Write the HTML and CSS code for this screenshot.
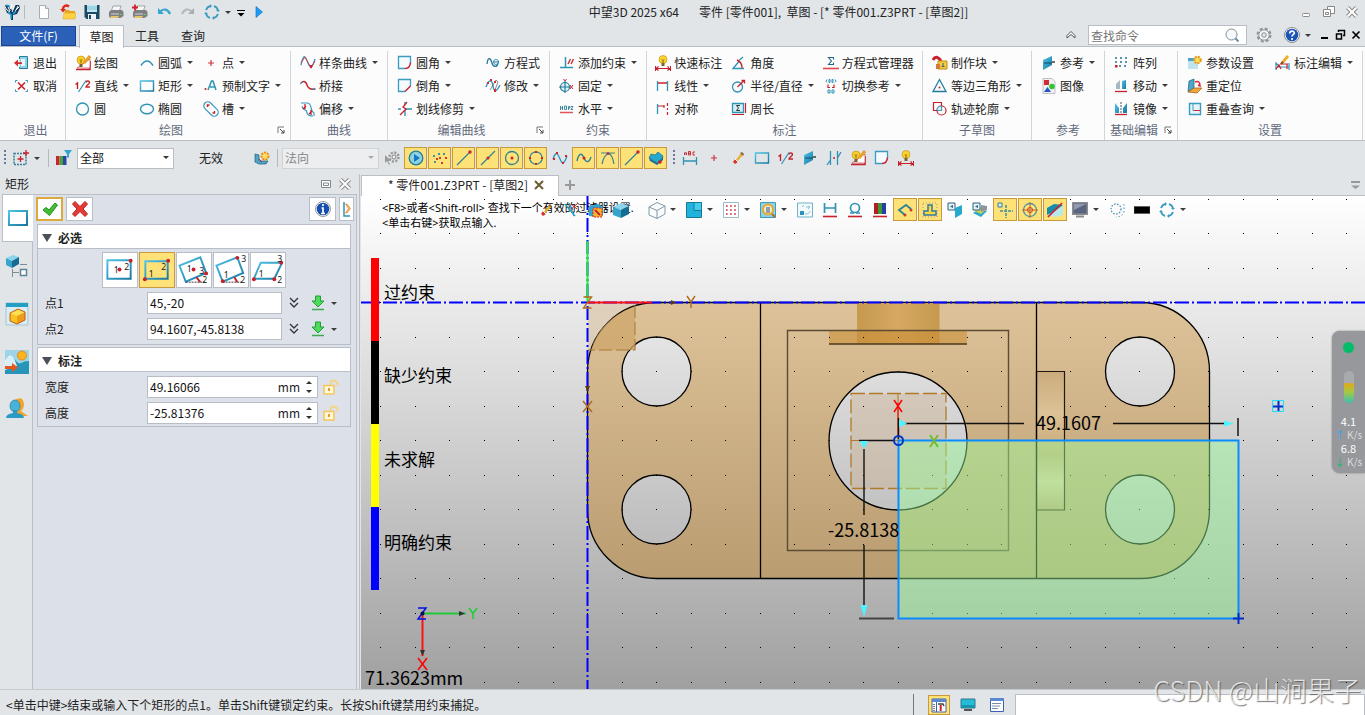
FILE: index.html
```html
<!DOCTYPE html>
<html lang="zh-CN">
<head>
<meta charset="utf-8">
<title>中望3D 2025 x64</title>
<link rel="stylesheet" href="styles.css">
</head>
<body>
<svg class="sprite" aria-hidden="true">
<defs>
<linearGradient id="gb" x1="0" y1="0" x2="1" y2="1"><stop offset="0" stop-color="#4fc3e8"/><stop offset="1" stop-color="#1878a0"/></linearGradient>
<linearGradient id="gc" x1="0" y1="0" x2="0" y2="1"><stop offset="0" stop-color="#eef4f6"/><stop offset="1" stop-color="#a9bcc8"/></linearGradient>
<symbol id="logo" viewBox="0 0 18 18"><path d="M1 2l5 1 1 3 3 1 2-5h4l1 3-3 6-4 1v5H8v-5L4 10z" fill="#123a5c"/><path d="M1 2l3 5 3 2M9 1l-1 4M12 2l-3 7M16 4l-4 4M5 4l2 4M13 7l2-4" stroke="#fff" fill="none"/><path d="M5 9l3 3M10 11l3-3M8 16v-5M3 2l4 1" stroke="#27a9dd" fill="none" stroke-width="1.500"/></symbol>
<symbol id="new" viewBox="0 0 16 16"><path d="M3.500 1.500h6l3 3v10h-9z" fill="#fff" stroke="#a8adb2"/><path d="M9.500 1.500v3h3" fill="#e4e7ea" stroke="#a8adb2"/></symbol>
<symbol id="open" viewBox="0 0 16 16"><path d="M5 6h4l1 1h5v8H4z" fill="#e5a61c"/><path d="M3 15l1-6h12l-1 6z" fill="#ffd044" stroke="#e0a020" stroke-width=".5"/><path d="M9 2.500C6 .5 3 2 3 5" fill="none" stroke="#e02818" stroke-width="2.500"/><path d="M0 5h6L3 8.500z" fill="#e02818"/></symbol>
<symbol id="save" viewBox="0 0 16 16"><path d="M.5 1h15v14h-13l-2-2z" fill="#1d4a63"/><path d="M3 1h10v7H3z" fill="#bfe6f2"/><path d="M3 3h10M3 5h10" stroke="#7cc3da"/><path d="M4 10h8v5H4z" fill="#eef3f5"/><path d="M5 11h2v4H5z" fill="#1d4a63"/></symbol>
<symbol id="print" viewBox="0 0 16 16"><path d="M5 2h8l-2 6H3z" fill="#f7f7f7" stroke="#888" stroke-width=".7"/><path d="M1 8l2-2h11l1.500 2v4l-3 2H2l-1-2z" fill="#7d7f82"/><path d="M3 10h8" stroke="#d5d5d5"/><path d="M12 10.500h2" stroke="#6dd04a"/><path d="M3 12h8l-1 2H2z" fill="#e4c565"/></symbol>
<symbol id="printp" viewBox="0 0 16 16"><use href="#print"/><path d="M0 3.500h6M3 .5v6" stroke="#d0222c" stroke-width="1.800"/></symbol>
<symbol id="undo" viewBox="0 0 16 16"><path d="M4 8c3-4 8-3 10 2" fill="none" stroke="#38a6cf" stroke-width="2.200"/><path d="M2 4v6h6z" fill="#38a6cf"/></symbol>
<symbol id="redo" viewBox="0 0 16 16"><path d="M12 8C9 4 4 5 2 10" fill="none" stroke="#b6bbc0" stroke-width="2.200"/><path d="M14 4v6H8z" fill="#a9aeb3"/></symbol>
<symbol id="ring" viewBox="0 0 16 16"><path d="M2 6A6.500 6.500 0 0 1 6 2M10 2a6.500 6.500 0 0 1 4 4M14 10a6.500 6.500 0 0 1-4 4M6 14a6.500 6.500 0 0 1-4-4" fill="none" stroke="#3b9cc0" stroke-width="2"/><path d="M6 0v4l2-2zM16 6h-4l2 2zM10 16v-4l-2 2zM0 10h4L2 8z" fill="#3b9cc0"/></symbol>
<symbol id="play" viewBox="0 0 16 16"><path d="M5 2.500l6.500 5.500L5 13.500z" fill="#1f9cf0" stroke="#1478d0" stroke-width=".7"/></symbol>
<symbol id="qmenu" viewBox="0 0 16 16"><path d="M4 6.500h8" stroke="#000"/><path d="M4.500 9h7L8 12.500z" fill="#000"/></symbol>
<symbol id="wmin" viewBox="0 0 16 16"><rect x="4.500" y="9.500" width="7" height="3" rx="1" fill="#fff" stroke="#888"/></symbol>
<symbol id="wres" viewBox="0 0 16 16"><path d="M6.500 2.500h7v7h-7z" fill="#fff" stroke="#888"/><path d="M2.500 5.500h7v7h-7z" fill="#fff" stroke="#888"/><path d="M4.500 8.500h3v2h-3z" fill="none" stroke="#888"/></symbol>
<symbol id="wclose" viewBox="0 0 16 16"><path d="M3.500 3.500l9 9M12.500 3.500l-9 9" stroke="#888" stroke-width="4"/><path d="M3.500 3.500l9 9M12.500 3.500l-9 9" stroke="#fff" stroke-width="2"/></symbol>
<symbol id="up" viewBox="0 0 16 16"><path d="M4 8.500l4-4 4 4v2.500L8 7.500 4 11z" fill="#fff" stroke="#555"/></symbol>
<symbol id="mag" viewBox="0 0 16 16"><circle cx="7.500" cy="7.500" r="5.500" fill="#f4f9fb" stroke="#888b8f"/><path d="M11.500 11.500l3 3" stroke="#5a8fa5" stroke-width="2"/></symbol>
<symbol id="gear" viewBox="0 0 16 16"><circle cx="8" cy="8" r="6.500" fill="none" stroke="#8f9396" stroke-width="2" stroke-dasharray="3 2.100"/><circle cx="8" cy="8" r="5.200" fill="#f4f4f4" stroke="#8f9396"/><circle cx="8" cy="8" r="2.300" fill="#dfe3e6" stroke="#8f9396"/></symbol>
<symbol id="help" viewBox="0 0 16 16"><circle cx="8" cy="8" r="7.500" fill="#fff" stroke="#888"/><circle cx="8" cy="8" r="6.300" fill="#1c55b8"/><path d="M5.700 6.500c0-3 4.600-3 4.600-.5C10.300 7.700 8 7.700 8 9.500" fill="none" stroke="#fff" stroke-width="1.700"/><circle cx="8" cy="12" r="1.100" fill="#fff"/></symbol>
<symbol id="bmin" viewBox="0 0 16 16"><path d="M5 11h7" stroke="#000" stroke-width="2"/></symbol>
<symbol id="bres" viewBox="0 0 16 16"><path d="M6.500 5v-1.500h6v5H11" fill="none" stroke="#000" stroke-width="1.500"/><path d="M4.500 7h5v5h-5z" fill="none" stroke="#000" stroke-width="1.500"/></symbol>
<symbol id="bclose" viewBox="0 0 16 16"><path d="M4.500 4.500l7 7M11.500 4.500l-7 7" stroke="#000" stroke-width="1.700"/></symbol>
<symbol id="exit" viewBox="0 0 16 16"><path d="M5.500 4V1.500h8v12h-8V12" fill="#8fd0e3" stroke="#257d9c"/><path d="M7 4h4v7H7z" fill="#e9f6fa"/><path d="M0 8l4-3.500v2.700h4v1.800H4v2.500z" fill="#d52b33"/></symbol>
<symbol id="cancel" viewBox="0 0 16 16"><path d="M1.500 4.500v-2h2M11.500 2.500h2v2M1.500 11.500v2h2M13.500 11.500v2h-2" fill="none" stroke="#2f93b5"/><path d="M4 4.500l7 7M11 4.500l-7 7" stroke="#c8202b" stroke-width="1.600"/></symbol>
<symbol id="draw" viewBox="0 0 16 16"><path d="M1 14.500h14V6M9 10l5-8" fill="none" stroke="#c8202b" stroke-width="1.500"/><path d="M2 13L15 4v9z" fill="#fff" stroke="#c8202b" stroke-width=".6"/><circle cx="6" cy="5" r="4" fill="#f8cf2a" stroke="#b98a10" stroke-width=".6"/><path d="M4.500 9h3v3h-3z" fill="#75612d"/><path d="M9 8l6-7" stroke="#e6a12c" stroke-width="3"/><path d="M5 4l1 4 1-4" stroke="#a97b09" fill="none" stroke-width=".8"/></symbol>
<symbol id="half" viewBox="0 0 16 16"><path d="M.5 6.500L2.500 5v6M11 4.500c0-2 3.500-2 3.500 0 0 1.500-3.500 3-3.500 4.500h4" fill="none" stroke="#c8202b" stroke-width="1.400"/><path d="M3.500 14L11 2.500" stroke="#2f93b5" stroke-width="1.200"/></symbol>
<symbol id="circ" viewBox="0 0 16 16"><circle cx="7.500" cy="8" r="6" fill="none" stroke="#2f93b5" stroke-width="1.300"/></symbol>
<symbol id="arc" viewBox="0 0 16 16"><path d="M2 10.500Q8 1.500 14 10.500" fill="none" stroke="#2f93b5" stroke-width="1.500"/></symbol>
<symbol id="rect" viewBox="0 0 16 16"><path d="M1.500 3h13v10h-13z" fill="none" stroke="url(#gb)" stroke-width="1.400"/></symbol>
<symbol id="ell" viewBox="0 0 16 16"><ellipse cx="8" cy="8" rx="6.500" ry="4.700" fill="none" stroke="#2f93b5" stroke-width="1.400"/></symbol>
<symbol id="pt" viewBox="0 0 16 16"><path d="M8 5v6M5 8h6" stroke="#cf3340" stroke-width="1.200"/></symbol>
<symbol id="txt" viewBox="0 0 16 16"><path d="M5 12L8.500 3h1.500l3 9M7 9h5" fill="none" stroke="#2f93b5" stroke-width="1.500"/><path d="M2.500 10v2" stroke="#d52b33" stroke-width="1.700"/></symbol>
<symbol id="slot" viewBox="0 0 16 16"><rect x="-.5" y="4" width="17" height="8" rx="4" transform="rotate(45 8 8)" fill="none" stroke="#3f9fbc" stroke-width="1.300"/><path d="M4.500 6v-2h2M11.500 10v2h-2" fill="none" stroke="#c8202b" stroke-width="1.400"/></symbol>
<symbol id="spline" viewBox="0 0 16 16"><path d="M1 10C4-4 6 3 8 8s4 6 7-4" fill="none" stroke="#2f93b5" stroke-width="1.300"/><path d="M1 8l4-6 6 11 4-7" fill="none" stroke="#d04a50"/><path d="M9.500 10l1.500 4 2-4z" fill="#c8202b"/></symbol>
<symbol id="bridge" viewBox="0 0 16 16"><path d="M1 5c3-3 5-1 6 2s3 5 8 4" fill="none" stroke="#c8202b" stroke-width="1.500"/><path d="M0 6l3-2M12 11h4" stroke="#2f93b5"/></symbol>
<symbol id="offset" viewBox="0 0 16 16"><path d="M1 2h6c6 0 2 7 7 10v3M2 5c1 6 5 2 5 7 1 3 4 3 6 3" fill="none" stroke="#3b9cc0" stroke-width="1.200"/><path d="M5 3v5M3 8l3-3M11 9v5M9 13l3-3" stroke="#c8202b" stroke-width="1.300"/></symbol>
<symbol id="fillet" viewBox="0 0 16 16"><path d="M8 13.500H1.500v-12h12V8" fill="#f4fbfd" stroke="#3b9cc0" stroke-width="1.300"/><path d="M8 13.500q5 0 5.500-6" fill="none" stroke="#c8202b" stroke-width="1.500"/></symbol>
<symbol id="chamfer" viewBox="0 0 16 16"><path d="M8 13.500H1.500v-12h12V8" fill="#f4fbfd" stroke="#3b9cc0" stroke-width="1.300"/><path d="M8 13.500L13.500 8" fill="none" stroke="#c8202b" stroke-width="1.500"/></symbol>
<symbol id="trim" viewBox="0 0 16 16"><path d="M1 8h3M8 8h7M8 1v3M8 9v6" stroke="#2f93b5" stroke-width="1.400"/><path d="M10 1L6 6l3 2-6 6" fill="none" stroke="#c8202b" stroke-width="1.300"/></symbol>
<symbol id="eq" viewBox="0 0 16 16"><path d="M2 9C3 0 6 4 7 8s5 5 6 0" fill="none" stroke="#2f7595" stroke-width="1.300"/><circle cx="11" cy="7" r="2.500" fill="none" stroke="#3b9cc0"/><path d="M8 7h6" stroke="#2f7595"/></symbol>
<symbol id="modify" viewBox="0 0 16 16"><path d="M1 9C4 0 7 2 8 8s3 7 7-1" fill="none" stroke="#2f93b5" stroke-width="1.400"/><path d="M5 12L11 2l2 2-3 8" fill="none" stroke="#6b5a55" stroke-width=".7"/><path d="M2 4h2v2H2zM5 1h2v2H5zM9 3h2v2H9zM9 11h2v3H9z" fill="#d52b33"/></symbol>
<symbol id="addc" viewBox="0 0 16 16"><path d="M6.500 2v11M1 12.500h13" stroke="#2f93b5" stroke-width="1.500"/><path d="M9 9l2.500-5M12 9l2.500-5" stroke="#c8202b" stroke-width="1.300"/></symbol>
<symbol id="fix" viewBox="0 0 16 16"><circle cx="6" cy="9" r="4.500" fill="#dff3f8" stroke="#257d9c" stroke-width="1.200"/><path d="M6 3v12M0 9h12" stroke="#257d9c" stroke-width="1.200"/><path d="M4.500 1L6 3 7.500 1M11 7l3 4M14 7l-3 4" fill="none" stroke="#d52b33"/></symbol>
<symbol id="horz" viewBox="0 0 16 16"><path d="M1.500 5v4M3.500 5v4M1.500 7h2M5.500 5h2v3.500h-2zM9.500 9V5.500h1.500v1.500H9.500M12 5.500h2L12 8.500h2" fill="none" stroke="#2c8099" stroke-width=".9"/><path d="M1 11.500h13" stroke="#e0565c" stroke-width="1.500"/></symbol>
<symbol id="qdim" viewBox="0 0 16 16"><circle cx="8" cy="4.500" r="4" fill="#fbd52e" stroke="#b98a10" stroke-width=".6"/><path d="M6.500 8h3v3h-3z" fill="#77652e"/><path d="M7 4l1 4 1-4" stroke="#a97b09" fill="none" stroke-width=".8"/><path d="M.5 11v5M15.500 11v5M1 13.500h14M3.500 11.500L1 13.500l2.500 2M12.500 11.500l2.500 2-2.500 2" fill="none" stroke="#c8202b" stroke-width="1.100"/></symbol>
<symbol id="lin" viewBox="0 0 16 16"><path d="M2.500 3v10M12.500 3v10" stroke="#2f93b5" stroke-width="1.300"/><path d="M3 5h9" stroke="#c8202b" stroke-width="1.500"/></symbol>
<symbol id="sym" viewBox="0 0 16 16"><path d="M2.500 3v10" stroke="#2f93b5" stroke-width="1.300"/><path d="M3 5h6M12.500 2v3M12.500 7v2M12.500 11v3M9 4v3" stroke="#c8202b" stroke-width="1.200"/></symbol>
<symbol id="ang" viewBox="0 0 16 16"><path d="M13 13.500H2L8 6.500M8.500 5L12 2" fill="none" stroke="#2f93b5" stroke-width="1.400"/><path d="M6 5q5 2 5 8" fill="none" stroke="#c8202b" stroke-width="1.400"/></symbol>
<symbol id="rad" viewBox="0 0 16 16"><circle cx="6.500" cy="9" r="5" fill="none" stroke="#2f93b5" stroke-width="1.300"/><path d="M6.500 9L13 2.500M10.500 2.500h3v3" stroke="#c8202b" fill="none" stroke-width="1.300"/></symbol>
<symbol id="peri" viewBox="0 0 16 16"><path d="M1.500 2.500h11v9h-11z" fill="#d4eef5" stroke="#2f93b5" stroke-width="1.300"/><path d="M9 4.500H5.500l2 2.500-2 2.500H9" fill="none" stroke="#333"/><path d="M14.500 2v10M1 13.500h12" stroke="#c8202b" stroke-width="1.200"/></symbol>
<symbol id="sig" viewBox="0 0 16 16"><path d="M10.500 4.500v-2h-5l3 3.500-3 3.500h5v-2" fill="none" stroke="#1f6a85" stroke-width="1.100"/><path d="M0 13.500h16" stroke="#e0464c" stroke-width="1.600"/></symbol>
<symbol id="swap" viewBox="0 0 16 16"><path d="M4 1.500q-2 2 0 3M12 1.500q2 2 0 3M6 1.500h1v3H6zM9 1.500h1v3H9zM5 12h2v3H5zM9 12h2v3H9z" fill="none" stroke="#2f93b5"/><path d="M5 6.500v3h2M11 6.500v3H9" fill="none" stroke="#c8202b" stroke-width="1.200"/></symbol>
<symbol id="block" viewBox="0 0 16 16"><path d="M1 5q3-6 8 1" fill="none" stroke="#c8202b" stroke-width="3"/><path d="M6 6h9v8H6z" fill="#f5ca42" stroke="#c28b13"/><path d="M4 9h4v5H4z" fill="#d57a32"/><path d="M11 8v3M9.500 11.500h3" stroke="#35627b"/></symbol>
<symbol id="tri" viewBox="0 0 16 16"><path d="M7.500 1.500L14 13.500H1z" fill="#f4fbfd" stroke="#257d9c" stroke-width="1.300"/><circle cx="7.500" cy="9.500" r="1" fill="#c8202b"/></symbol>
<symbol id="prof" viewBox="0 0 16 16"><path d="M1.500 1.500h8v8h-8z" fill="none" stroke="#c8202b" stroke-width="1.200"/><circle cx="9.500" cy="9.500" r="4.500" fill="none" stroke="#c8202b" stroke-width="1.200"/><path d="M5 9.500q0-4.500 4.500-4.500v4.500z" fill="#d4ecf4" stroke="#3b9cc0"/></symbol>
<symbol id="ref" viewBox="0 0 16 16"><path d="M2 5l9-4v9l-9 5z" fill="url(#gb)"/><path d="M3 8h8" stroke="#0d4963"/><path d="M11 7h3" stroke="#222" stroke-width="1.300"/></symbol>
<symbol id="img" viewBox="0 0 16 16"><path d="M2 .5h9l3 3v12H2z" fill="#eef0f2" stroke="#aaa" stroke-width=".7"/><path d="M3 2h5v5H3z" fill="#d02b36"/><circle cx="11" cy="8.500" r="2.800" fill="#2dc436"/><path d="M3 14l3.500-5 3.500 5z" fill="#2055c5"/></symbol>
<symbol id="array" viewBox="0 0 16 16"><path d="M1 3h12M1 7h12M5 11h8" stroke="#5b93ad" stroke-width="2" stroke-dasharray="2 3"/><path d="M1 10h2.500v2.500H1z" fill="#c8202b"/></symbol>
<symbol id="move" viewBox="0 0 16 16"><path d="M2 11V6l4-4v9z" fill="#a7bac3"/><path d="M8 11V3l4-1v9z" fill="url(#gb)"/><path d="M1 13.500h12" stroke="#c8202b" stroke-width="1.300"/></symbol>
<symbol id="mirror" viewBox="0 0 16 16"><path d="M1 12V2l4 5v5zM13 12V2L9 7v5z" fill="url(#gb)"/><path d="M7 1v12" stroke="#555" stroke-dasharray="2 1"/><path d="M1 13.500h12" stroke="#c8202b" stroke-width="1.300"/></symbol>
<symbol id="param" viewBox="0 0 16 16"><path d="M1 4h10v10H1z" fill="#bfe3ef"/><path d="M1 3h10v3H1z" fill="#4ea4c4"/><circle cx="10.500" cy="5" r="3.200" fill="#ffe062" stroke="#e89a1c" stroke-width="2.200" stroke-dasharray="2 1"/></symbol>
<symbol id="reloc" viewBox="0 0 16 16"><path d="M2 3l5-2v9l-6 4z" fill="#4aa8c8" stroke="#235d78" stroke-width=".7"/><path d="M1 14l6-4h8l-5 5z" fill="#f0a63a" stroke="#a55a1a" stroke-width=".7"/><path d="M8 4q5-2 5 4l-2-1" fill="none" stroke="#d52b33" stroke-width="1.600"/></symbol>
<symbol id="overlap" viewBox="0 0 16 16"><path d="M2.500 2.500h11v11h-11z" fill="#e6f5fa" stroke="#3b9cc0" stroke-width="1.400"/><path d="M6 2.500v7h7.500" fill="none" stroke="#3b9cc0"/><path d="M7 9h6v1H7z" fill="#d52b33"/></symbol>
<symbol id="dimed" viewBox="0 0 16 16"><path d="M1 15V8l3 3M14 15V8M2 12h12" fill="none" stroke="#2f93b5" stroke-width="1.200"/><path d="M1 14l3-4 2 4M12 9v5M5 9h8" stroke="#c8202b" fill="none" stroke-width="1.200"/><path d="M7 8l6-7" stroke="#efac2b" stroke-width="2.800"/><path d="M6 9l2-2" stroke="#6c4a2a" stroke-width="2"/></symbol>
<symbol id="corner" viewBox="0 0 8 8"><path d="M1 7V1h6" fill="none" stroke="#777"/><path d="M3 3l4 4M7 4v3H4" fill="none" stroke="#444"/></symbol>
<symbol id="pick" viewBox="0 0 16 16"><path d="M1 3.500h12v11H1z" fill="none" stroke="#357d99" stroke-width="1.500" stroke-dasharray="2 1"/><path d="M7.500 6v6M4.500 9h6M13 0v6M10 3h6" stroke="#c8202b" stroke-width="1.300"/></symbol>
<symbol id="filter" viewBox="0 0 16 16"><path d="M0 6h3.500v9H0z" fill="#d0222c"/><path d="M3.500 6H7v9H3.500z" fill="#49a238"/><path d="M7 6h3.500v9H7z" fill="#2747a8"/><path d="M8 0h8l-3 4v4l-2-1V4z" fill="#2fa6cf"/></symbol>
<symbol id="wcs" viewBox="0 0 16 16"><path d="M1 4v8l4 2h7l2-3H5V5z" fill="#4aa8c8" stroke="#235d78" stroke-width=".7"/><circle cx="11" cy="6" r="3.500" fill="#ffe062" stroke="#e58b1b" stroke-width="2" stroke-dasharray="2 1"/><path d="M5 9l3 3" stroke="#c8202b"/></symbol>
<symbol id="gearx" viewBox="0 0 16 16"><circle cx="10" cy="7" r="4.500" fill="#ddd" stroke="#999" stroke-width="2.500" stroke-dasharray="2 1.500"/><circle cx="10" cy="7" r="2" fill="#f1f1f1" stroke="#888"/><path d="M1 5v8l2-2 2 4 1-1-2-3h3z" fill="#999"/></symbol>
<symbol id="cplay" viewBox="0 0 16 16"><circle cx="8" cy="8" r="6.800" fill="#8fd3de" stroke="#1f7f9f" stroke-width="1.300"/><path d="M6 4l6 4-6 4z" fill="#1677c6"/></symbol>
<symbol id="pts" viewBox="0 0 16 16"><path d="M1 5h2v2H1zM6 3h2v2H6zM11 3h2v2h-2zM2 11h2v2H2z" fill="#3b93a5"/><path d="M7 7h2v2H7zM4 8h2v2H4zM13 7h2v2h-2zM9 12h2v2H9z" fill="#c8402b"/></symbol>
<symbol id="lend" viewBox="0 0 16 16"><path d="M1 15L14 2" stroke="#2f8595" stroke-width="1.300"/><circle cx="14" cy="2" r="1.700" fill="#d0222c"/></symbol>
<symbol id="lmid" viewBox="0 0 16 16"><path d="M1 15L15 1" stroke="#2f8595" stroke-width="1.300"/><circle cx="8" cy="8" r="1.500" fill="#d0222c"/></symbol>
<symbol id="cdot" viewBox="0 0 16 16"><circle cx="8" cy="8" r="6.500" fill="none" stroke="#2f8595" stroke-width="1.300"/><circle cx="8" cy="8" r="1.500" fill="#d0222c"/></symbol>
<symbol id="cquad" viewBox="0 0 16 16"><circle cx="8" cy="8" r="6.200" fill="none" stroke="#2f8595" stroke-width="1.300"/><path d="M7 1h2v2H7zM1 7h2v2H1zM13 7h2v2h-2zM7 13h2v2H7z" fill="#d0222c"/></symbol>
<symbol id="wave" viewBox="0 0 16 16"><path d="M1 9C4 0 6 4 8 9s4 6 7-3" fill="none" stroke="#2f93b5" stroke-width="1.300"/><path d="M1 8h2v2H1zM4 2h2v2H4zM10 12h2v2h-2zM13 5h2v2h-2z" fill="#d0222c"/></symbol>
<symbol id="wave2" viewBox="0 0 16 16"><path d="M1 11C3 2 6 3 8 8s5 5 7-1" fill="none" stroke="#2f8595" stroke-width="1.400"/><circle cx="8" cy="8" r="1.500" fill="#d0222c"/></symbol>
<symbol id="tang" viewBox="0 0 16 16"><path d="M1 3h14M2 14Q4 5 8 4t6 10" fill="none" stroke="#2f8595" stroke-width="1.200"/><circle cx="8" cy="3.500" r="1.300" fill="#d0222c"/></symbol>
<symbol id="face" viewBox="0 0 16 16"><path d="M1 8l2-4 4 1 3-3 5 4-1 4-5 3z" fill="#27a9cf" stroke="#176c8c" stroke-width=".7"/><path d="M1 8l8 5v2l-7-4zM15 7v3l-6 5v-2z" fill="#16708e"/><circle cx="12" cy="12" r="1.800" fill="#d0222c"/></symbol>
<symbol id="abc" viewBox="0 0 16 16"><path d="M2.500 5V3l1-1 1 1v2M2.500 4h2M6.500 1.500h2v3.500h-2zM6.500 3.300h2M13 2h-2v3h2" fill="none" stroke="#c8202b" stroke-width=".9"/><path d="M1.500 7v8M14.500 7v8M2 11h12" stroke="#2f93b5" stroke-width="1.300"/></symbol>
<symbol id="brush" viewBox="0 0 16 16"><path d="M5 11l6-8 2 2-6 7z" fill="#e9b13c"/><path d="M3 12l2-3 3 3-3 2z" fill="#d5362e"/><path d="M10 3l2-1 2 2-1 2z" fill="#8c6b3c"/><path d="M5 9l3 3" stroke="#fff"/></symbol>
<symbol id="symc" viewBox="0 0 16 16"><path d="M4.500 1v9L1 15M11.500 15V8L15 2M11.500 1v7M4.500 10v5" fill="none" stroke="#2f93b5" stroke-width="1.300"/><circle cx="8" cy="8" r="1" fill="#c8202b"/></symbol>
<symbol id="snip" viewBox="0 0 16 16"><path d="M2 2l10 12M6 1l5 13" stroke="#2fa0c8" stroke-width="1.500"/><path d="M8 2l6 5M14 2L8 7" stroke="#c8202b"/></symbol>
<symbol id="boxsel" viewBox="0 0 16 16"><path d="M1 4l9-2 5 3v8l-5 2-9-1z" fill="#2fa6cf"/><path d="M5 6h9v9H5z" fill="#f9b62c" stroke="#d0222c" stroke-dasharray="2 1"/><path d="M7 8l5 5" stroke="#c8202b" stroke-width="2"/></symbol>
<symbol id="cube" viewBox="0 0 18 18"><path d="M1 6l8-4 8 3-8 4z" fill="#8dd5ed"/><path d="M1 6l8 3v8l-8-3z" fill="#36a5cc"/><path d="M9 9l8-4v8l-8 4z" fill="#166d91"/></symbol>
<symbol id="wire" viewBox="0 0 18 18"><path d="M1 6l8-4.500L17 5l-8 4.500zM1 6v8l8 3.500V9.500M17 5v8l-8 4.500" fill="#fafcfd" stroke="#7f9aa8"/></symbol>
<symbol id="bsq" viewBox="0 0 16 16"><path d="M.5.500h15v15H.5z" fill="#20b4dc" stroke="#187a9a"/><path d="M8 .5h7.500v8H8z" fill="#48cbeb" stroke="#187a9a"/></symbol>
<symbol id="grid" viewBox="0 0 16 16"><path d="M.5.500h15v15H.5z" fill="#fff" stroke="#9abccb"/><path d="M3 4h11M3 8h11M3 12h11" stroke="#c8202b" stroke-width="1.600" stroke-dasharray="1.600 2.500"/></symbol>
<symbol id="zoomv" viewBox="0 0 16 16"><path d="M.5.500h15v15H.5z" fill="#8ed0e4" stroke="#3b9cc0"/><circle cx="8" cy="7.500" r="5" fill="#f0ecd8" stroke="#e8a92a" stroke-width="2"/><path d="M6 5h4v6H6z" fill="#8fa1a8"/><path d="M12 12l3 3" stroke="#b36f18" stroke-width="2"/></symbol>
<symbol id="pane" viewBox="0 0 16 16"><path d="M.5 1h15v14H.5z" fill="#f3fafc" stroke="#6fb3cb"/><path d="M3 9h4v4H3z" fill="#2f93b5"/><path d="M9 5h4M11 4l2 1-2 2M5 5l2-2M8 12q5 0 5-3" fill="none" stroke="#8cc4d6"/></symbol>
<symbol id="hdim" viewBox="0 0 16 16"><path d="M2.500 1v10M13.500 1v10M3 6h10" stroke="#2f93b5" stroke-width="1.700"/><path d="M1 14.500h14" stroke="#c8202b" stroke-width="1.600"/></symbol>
<symbol id="omega" viewBox="0 0 16 16"><circle cx="8" cy="6" r="4.500" fill="none" stroke="#2f93b5" stroke-width="1.700"/><path d="M3 11h4M9 11h4" stroke="#2f93b5" stroke-width="1.700"/><path d="M1 14.500h14" stroke="#c8202b" stroke-width="1.600"/></symbol>
<symbol id="rgb" viewBox="0 0 16 16"><path d="M2 1h4v11H2z" fill="#b51d26"/><path d="M6 1h4v11H6z" fill="#3d9b35"/><path d="M10 1h4v11h-4z" fill="#253fa4"/><path d="M1 14.500h14" stroke="#c8202b" stroke-width="1.600"/></symbol>
<symbol id="chain" viewBox="0 0 16 16"><path d="M8 13L2 8l7-5 5 4" fill="none" stroke="#2f8595" stroke-width="1.900"/><circle cx="14" cy="8" r="1.500" fill="#c8402b"/><circle cx="8" cy="13" r="1.500" fill="#c8402b"/></symbol>
<symbol id="tshape" viewBox="0 0 16 16"><path d="M1 1h14v14H1z" fill="none" stroke="#999" stroke-dasharray="1 2"/><path d="M6 3h4v6h4v4H2V9h4z" fill="#ffd83d" stroke="#2f7ca5" stroke-width="1.500"/></symbol>
<symbol id="proj" viewBox="0 0 16 16"><path d="M1 1h7v7H1z" fill="#e1f2f8" stroke="#35627b"/><path d="M3 4.500l3-1.500v3z" fill="#35627b"/><path d="M8 6l7-3v9l-7 4z" fill="#27a9cf"/></symbol>
<symbol id="layer" viewBox="0 0 16 16"><path d="M1 11l6-4 8 2-6 6z" fill="#27a9cf"/><path d="M1 8l6-3 8 2-6 5z" fill="#d4d24c"/><path d="M1 1h7v7H1z" fill="#e1f2f8" stroke="#35627b"/><path d="M3 4.500l3-1.500v3z" fill="#35627b"/><path d="M9 3l6 1v4l-6 2" fill="#8a979e"/></symbol>
<symbol id="gcross" viewBox="0 0 16 16"><path d="M9 3v13M3 9h13" stroke="#3b93a5" stroke-width="1.500" stroke-dasharray="3 1"/><path d="M1 1h4v4H1z" fill="#d6edf2" stroke="#3b7f95"/></symbol>
<symbol id="target" viewBox="0 0 16 16"><circle cx="8" cy="8" r="6.500" fill="none" stroke="#4a96a5" stroke-width="1.300"/><path d="M8 0v16M0 8h16" stroke="#c8602b"/><circle cx="8" cy="8" r="2.500" fill="none" stroke="#c8402b"/></symbol>
<symbol id="nobox" viewBox="0 0 16 16"><path d="M0 6l7-4 9 1v10l-8 2-8-2z" fill="#b8e8ee"/><path d="M0 6l7-4 9 1-8 6-8 4z" fill="#168cab"/><path d="M1 15L15 1" stroke="#d0222c" stroke-width="1.700"/></symbol>
<symbol id="mon" viewBox="0 0 16 16"><path d="M0 0h16v13H0z" fill="#8b8d90"/><path d="M1.500 1.500h13v10h-13z" fill="#59657e"/><path d="M2 2h12L2 8z" fill="#8f9bad"/><path d="M4 14.500h8" stroke="#888" stroke-width="2"/></symbol>
<symbol id="dots" viewBox="0 0 16 16"><circle cx="7" cy="7" r="5" fill="none" stroke="#4a8fae" stroke-width="1.300" stroke-dasharray="1.500 1.500"/><path d="M15 2v8q-2 5-8 5" fill="none" stroke="#4a8fae" stroke-dasharray="1.500 2"/></symbol>
<symbol id="black" viewBox="0 0 16 16"><path d="M0 4.500h16v7H0z" fill="#000" stroke="#555" stroke-width=".7"/></symbol>
<symbol id="ok" viewBox="0 0 16 16"><path d="M1 9l3-2.500L7 9l6-7 2.500 2L7.500 14.500z" fill="#3fc12f" stroke="#268c1c"/></symbol>
<symbol id="no" viewBox="0 0 16 16"><path d="M3 .5L8 5.500 13 .5 15.500 3 11 8l4.500 5-2.500 2.500-5-5-5 5L.5 13 5 8 .5 3z" fill="#e83a34" stroke="#b91f20"/></symbol>
<symbol id="info" viewBox="0 0 16 16"><circle cx="8" cy="8" r="7.500" fill="#fff" stroke="#999"/><circle cx="8" cy="8" r="6.300" fill="#164fae"/><path d="M8 3v2M6.500 7H8v5M6 12.500h4" stroke="#fff" stroke-width="1.700" fill="none"/></symbol>
<symbol id="expand" viewBox="0 0 8 16"><path d="M1 1v14h6" fill="none" stroke="#2f93b5" stroke-width="1.500"/><path d="M2.500 3l3 4.500-3 4.500h1.500L7.500 7.500 4 3z" fill="#f5b56a" stroke="#e38a2c" stroke-width=".7"/></symbol>
<symbol id="m1" viewBox="0 0 35 35"><path d="M4.500 7.500h24v19h-24z" fill="#fff" stroke="url(#gb)" stroke-width="2"/><circle cx="17" cy="17" r="2" fill="#c8202b"/><circle cx="28.500" cy="8" r="2" fill="#c8202b"/><text x="11" y="21">1</text><text x="22" y="18">2</text></symbol>
<symbol id="m2" viewBox="0 0 35 35"><path d="M5.500 8.500h23v18h-23z" fill="none" stroke="url(#gb)" stroke-width="2"/><circle cx="5" cy="27" r="2" fill="#c8202b"/><circle cx="29" cy="8" r="2" fill="#c8202b"/><text x="9" y="25">1</text><text x="22" y="18">2</text></symbol>
<symbol id="m3" viewBox="0 0 35 35"><path d="M2.500 13L24 4.500l6 16L9 29.500z" fill="#fff" stroke="url(#gb)" stroke-width="2"/><path d="M9 30h21" stroke="#333" stroke-dasharray="2 1"/><path d="M20 25l4 5" stroke="#c8202b" stroke-width="2"/><circle cx="17" cy="17" r="2" fill="#c8202b"/><circle cx="30" cy="21" r="2" fill="#c8202b"/><text x="10" y="20">1</text><text x="23" y="22">3</text><text x="26" y="31">2</text></symbol>
<symbol id="m4" viewBox="0 0 35 35"><path d="M2.500 13L24 4.500l6 16L9 29.500z" fill="#fff" stroke="url(#gb)" stroke-width="2"/><path d="M9 30h21" stroke="#333" stroke-dasharray="2 1"/><path d="M21 25l3 5" stroke="#c8202b" stroke-width="2"/><circle cx="9" cy="29" r="2" fill="#c8202b"/><circle cx="24" cy="5" r="2" fill="#c8202b"/><text x="10" y="26">1</text><text x="28" y="9">3</text><text x="27" y="31">2</text></symbol>
<symbol id="m5" viewBox="0 0 35 35"><path d="M3 26.500L10 10h22l-8 16.500z" fill="#fff" stroke="url(#gb)" stroke-width="2"/><circle cx="3" cy="27" r="2" fill="#c8202b"/><circle cx="24" cy="27" r="2" fill="#c8202b"/><circle cx="31" cy="10" r="2" fill="#c8202b"/><text x="8" y="25">1</text><text x="27" y="9">3</text><text x="27" y="31">2</text></symbol>
<symbol id="brect" viewBox="0 0 20 18"><path d="M1 2h18v14H1z" fill="#fff" stroke="url(#gb)" stroke-width="2"/></symbol>
<symbol id="tree" viewBox="0 0 24 24"><path d="M1 4l7-3 6 2-7 4z" fill="#8dd5ed"/><path d="M1 4l6 3v7l-6-3z" fill="#36a5cc"/><path d="M7 7l7-4v7l-7 4z" fill="#166d91"/><path d="M15 10.500h7M7.500 15v8M8 18.500h6" fill="none" stroke="#7a8c96"/><path d="M15.500 15.500h6v6h-6z" fill="#fff" stroke="#5d8598" stroke-width="1.500"/></symbol>
<symbol id="obj" viewBox="0 0 24 24"><path d="M1 1h22v22H1z" fill="#d8edf4" stroke="#a6c5d1"/><path d="M1 1h22v4H1z" fill="#259ec6"/><path d="M5 11l8-4 7 3-8 4z" fill="#ffe04a"/><path d="M5 11l7 3v8l-7-3z" fill="#fbc11f"/><path d="M12 14l8-4v8l-8 4z" fill="#ee9d18"/><path d="M5 11l8-4 7 3v8l-8 4-7-3z" fill="none" stroke="#c9561b"/></symbol>
<symbol id="scene" viewBox="0 0 24 24"><path d="M0 0h24v24H0z" fill="#9cd4e8"/><path d="M0 10Q5 1 9 8t7 5 8-2v13H0z" fill="#2794ba"/><path d="M0 10Q5 1 9 8l3 8-12 4z" fill="#d9eef5"/><circle cx="17" cy="5.500" r="4.500" fill="#fbb31f" stroke="#e68c17"/><path d="M0 16h7v-3l6 4.500L7 22v-3H0z" fill="#e4571d"/></symbol>
<symbol id="user" viewBox="0 0 24 24"><path d="M10 2q8-5 9 4 0 5-3 7l7 5H12z" fill="#f2a629"/><ellipse cx="10" cy="8" rx="5" ry="6" fill="#48b3d8" stroke="#1f7ea5" stroke-width=".7"/><path d="M1 20q0-4 7-5v-3h4v3q7 1 7 5z" fill="#2a9bc4"/></symbol>
<symbol id="chev" viewBox="0 0 12 14"><path d="M2 2l4 4 4-4M2 7l4 4 4-4" fill="none" stroke="#333" stroke-width="1.300"/></symbol>
<symbol id="down" viewBox="0 0 14 16"><path d="M4.500 1h5v5h3.500L7 12 1 6h3.500z" fill="#4ddb5c" stroke="#259c37"/><path d="M1 14.500h12" stroke="#3cab4c" stroke-width="1.500"/></symbol>
<symbol id="lock" viewBox="0 0 16 16"><path d="M7.500 7V4q0-2.500 3-2.500t4 3v2" fill="none" stroke="#f5d488" stroke-width="2"/><path d="M1 6.500h10v8.500H1z" fill="#fff8dd" stroke="#f6c65a" stroke-width="1.500"/><path d="M6 9v3" stroke="#e5a11f" stroke-width="2"/></symbol>
<symbol id="pin" viewBox="0 0 16 16"><path d="M3.500 4.500h9v7h-9z" fill="#fff" stroke="#808890"/><path d="M5.500 7h5v2.500h-5z" fill="none" stroke="#808890"/></symbol>
<symbol id="dclose" viewBox="0 0 16 16"><path d="M4 4l8 8M12 4l-8 8" stroke="#6b5c35" stroke-width="2"/></symbol>
<symbol id="plus" viewBox="0 0 16 16"><path d="M8 3v10M3 8h10" stroke="#999" stroke-width="2"/></symbol>
<symbol id="tmenu" viewBox="0 0 16 16"><path d="M4 5h9" stroke="#999" stroke-width="2"/><path d="M4 8.500h9L8.500 12z" fill="#999"/></symbol>
<symbol id="st1" viewBox="0 0 16 16"><path d="M1 2h14v13H1z" fill="#fff" stroke="#3c62ad"/><path d="M1 2h14v3H1z" fill="#5c88d0"/><path d="M3 7v7" stroke="#555" stroke-width="1.500" stroke-dasharray="1 1"/><path d="M5.500 5v10" stroke="#3c62ad"/><path d="M7 7h5l1 2" fill="none" stroke="#444" stroke-width="1.500"/><path d="M9.700 8v6" stroke="#d0222c" stroke-width="2"/></symbol>
<symbol id="st2" viewBox="0 0 16 16"><path d="M1 2h14v9H1z" fill="#23bcd9" stroke="#35778a"/><path d="M1 8h14v3H1z" fill="#1b93ad"/><path d="M4 13h8" stroke="#555" stroke-width="2"/></symbol>
<symbol id="st3" viewBox="0 0 16 16"><path d="M1.500 1.500h13v13h-13z" fill="#fff" stroke="#3c62ad"/><path d="M1 1h14v3H1z" fill="#5c88d0"/><path d="M3 6.500h9M3 9h8M3 11.500h6" stroke="#7b8ca8"/></symbol>
</defs>
</svg>

<header class="titlebar">
  <svg class="logo"><use href="#logo"/></svg><span class="vsep"></span>
  <div class="quick">
    <button class="q" aria-label="新建"><svg><use href="#new"/></svg></button><button class="q" aria-label="打开"><svg><use href="#open"/></svg></button><button class="q" aria-label="保存"><svg><use href="#save"/></svg></button><button class="q" aria-label="打印"><svg><use href="#print"/></svg></button><button class="q" aria-label="批量打印"><svg><use href="#printp"/></svg></button><button class="q" aria-label="撤销"><svg><use href="#undo"/></svg></button><button class="q" aria-label="重做"><svg><use href="#redo"/></svg></button><button class="q" aria-label="刷新"><svg><use href="#ring"/></svg></button><button class="qa" aria-label="刷新选项"><i class="caret"></i></button><button class="qm" aria-label="自定义"><svg><use href="#qmenu"/></svg></button><button class="qm" aria-label="展开"><svg><use href="#play"/></svg></button>
  </div>
  <h1 class="title"><span>中望3D 2025 x64</span><span>零件 [零件001],&nbsp; 草图 - [* 零件001.Z3PRT - [草图2]]</span></h1>
  <div class="winbtns"><button aria-label="最小化"><svg><use href="#wmin"/></svg></button><button aria-label="还原"><svg><use href="#wres"/></svg></button><button aria-label="关闭"><svg><use href="#wclose"/></svg></button></div>
</header>

<nav class="tabs">
  <button class="file">文件(F)</button><button class="tab on">草图</button><button class="tab">工具</button><button class="tab">查询</button>
  <div class="tabright">
    <button aria-label="折叠功能区"><svg><use href="#up"/></svg></button>
    <label class="search"><input type="text" placeholder="查找命令" aria-label="查找命令"><svg><use href="#mag"/></svg></label>
    <button aria-label="设置"><svg><use href="#gear"/></svg></button>
    <button class="helpb" aria-label="帮助"><svg><use href="#help"/></svg><i class="caret"></i></button>
    <div class="mdi"><button aria-label="最小化文档"><svg><use href="#bmin"/></svg></button><button aria-label="还原文档"><svg><use href="#bres"/></svg></button><button aria-label="关闭文档"><svg><use href="#bclose"/></svg></button></div>
  </div>
</nav>

<section class="ribbon">
  <div class="group first"><div class="cols"><div class="col"><button><svg><use href="#exit"/></svg>退出</button><button><svg><use href="#cancel"/></svg>取消</button></div></div><div class="glabel">退出</div></div>
  <div class="group"><div class="cols">
    <div class="col"><button><svg><use href="#draw"/></svg>绘图</button><button><svg><use href="#half"/></svg>直线<i class="caret"></i></button><button><svg><use href="#circ"/></svg>圆</button></div>
    <div class="col"><button><svg><use href="#arc"/></svg>圆弧<i class="caret"></i></button><button><svg><use href="#rect"/></svg>矩形<i class="caret"></i></button><button><svg><use href="#ell"/></svg>椭圆</button></div>
    <div class="col"><button><svg><use href="#pt"/></svg>点<i class="caret"></i></button><button><svg><use href="#txt"/></svg>预制文字<i class="caret"></i></button><button><svg><use href="#slot"/></svg>槽<i class="caret"></i></button></div>
  </div><div class="glabel opt">绘图<button class="more" aria-label="绘图选项"><svg><use href="#corner"/></svg></button></div></div>
  <div class="group"><div class="cols"><div class="col"><button><svg><use href="#spline"/></svg>样条曲线<i class="caret"></i></button><button><svg><use href="#bridge"/></svg>桥接</button><button><svg><use href="#offset"/></svg>偏移<i class="caret"></i></button></div></div><div class="glabel">曲线</div></div>
  <div class="group"><div class="cols">
    <div class="col"><button><svg><use href="#fillet"/></svg>圆角<i class="caret"></i></button><button><svg><use href="#chamfer"/></svg>倒角<i class="caret"></i></button><button><svg><use href="#trim"/></svg>划线修剪<i class="caret"></i></button></div>
    <div class="col"><button><svg><use href="#eq"/></svg>方程式</button><button><svg><use href="#modify"/></svg>修改<i class="caret"></i></button></div>
  </div><div class="glabel opt">编辑曲线<button class="more" aria-label="编辑曲线选项"><svg><use href="#corner"/></svg></button></div></div>
  <div class="group"><div class="cols"><div class="col"><button><svg><use href="#addc"/></svg>添加约束<i class="caret"></i></button><button><svg><use href="#fix"/></svg>固定<i class="caret"></i></button><button><svg><use href="#horz"/></svg>水平<i class="caret"></i></button></div></div><div class="glabel">约束</div></div>
  <div class="group dense"><div class="cols">
    <div class="col"><button><svg><use href="#qdim"/></svg>快速标注</button><button><svg><use href="#lin"/></svg>线性<i class="caret"></i></button><button><svg><use href="#sym"/></svg>对称</button></div>
    <div class="col"><button><svg><use href="#ang"/></svg>角度</button><button><svg><use href="#rad"/></svg>半径/直径<i class="caret"></i></button><button><svg><use href="#peri"/></svg>周长</button></div>
    <div class="col"><button><svg><use href="#sig"/></svg>方程式管理器</button><button><svg><use href="#swap"/></svg>切换参考<i class="caret"></i></button></div>
  </div><div class="glabel">标注</div></div>
  <div class="group"><div class="cols"><div class="col"><button><svg><use href="#block"/></svg>制作块<i class="caret"></i></button><button><svg><use href="#tri"/></svg>等边三角形<i class="caret"></i></button><button><svg><use href="#prof"/></svg>轨迹轮廓<i class="caret"></i></button></div></div><div class="glabel">子草图</div></div>
  <div class="group"><div class="cols"><div class="col"><button><svg><use href="#ref"/></svg>参考<i class="caret"></i></button><button><svg><use href="#img"/></svg>图像</button></div></div><div class="glabel">参考</div></div>
  <div class="group"><div class="cols"><div class="col"><button><svg><use href="#array"/></svg>阵列</button><button><svg><use href="#move"/></svg>移动<i class="caret"></i></button><button><svg><use href="#mirror"/></svg>镜像<i class="caret"></i></button></div></div><div class="glabel tight">基础编辑<button class="more" aria-label="基础编辑选项"><svg><use href="#corner"/></svg></button></div></div>
  <div class="group"><div class="cols">
    <div class="col"><button><svg><use href="#param"/></svg>参数设置</button><button><svg><use href="#reloc"/></svg>重定位</button><button><svg><use href="#overlap"/></svg>重叠查询<i class="caret"></i></button></div>
    <div class="col"><button><svg><use href="#dimed"/></svg>标注编辑<i class="caret"></i></button></div>
  </div><div class="glabel">设置</div></div>
</section>

<section class="toolbar">
  <span class="grip"></span>
  <button class="t pick" aria-label="选择"><svg><use href="#pick"/></svg><i class="caret"></i></button>
  <span class="vsep"></span>
  <svg class="ficon"><use href="#filter"/></svg>
  <label class="sel"><select aria-label="过滤器"><option>全部</option></select></label>
  <span class="inv">无效</span>
  <button class="t" aria-label="坐标"><svg><use href="#wcs"/></svg></button>
  <span class="vsep"></span>
  <label class="sel off"><select aria-label="方向" disabled><option>法向</option></select></label>
  <div class="tset">
    <button class="t" aria-label="捕捉设置"><svg><use href="#gearx"/></svg></button><button class="t on" aria-label="启用捕捉"><svg><use href="#cplay"/></svg></button><button class="t on" aria-label="点捕捉"><svg><use href="#pts"/></svg></button><button class="t on" aria-label="端点"><svg><use href="#lend"/></svg></button><button class="t on" aria-label="中点"><svg><use href="#lmid"/></svg></button><button class="t on" aria-label="圆心"><svg><use href="#cdot"/></svg></button><button class="t on" aria-label="象限点"><svg><use href="#cquad"/></svg></button><button class="t" aria-label="控制点"><svg><use href="#wave"/></svg></button><button class="t on" aria-label="曲线上点"><svg><use href="#wave2"/></svg></button><button class="t on" aria-label="切点"><svg><use href="#tang"/></svg></button><button class="t on" aria-label="线上点"><svg><use href="#lend"/></svg></button><button class="t on" aria-label="面上点"><svg><use href="#face"/></svg></button>
  </div>
  <span class="grip"></span>
  <div class="tset">
    <button class="t" aria-label="文字标注"><svg><use href="#abc"/></svg></button><button class="t" aria-label="点"><svg><use href="#pt"/></svg></button><button class="t" aria-label="格式刷"><svg><use href="#brush"/></svg></button><button class="t" aria-label="矩形"><svg><use href="#rect"/></svg></button><button class="t" aria-label="直线"><svg><use href="#half"/></svg></button><button class="t" aria-label="参考"><svg><use href="#ref"/></svg></button><button class="t" aria-label="对称约束"><svg><use href="#symc"/></svg></button><button class="t" aria-label="绘图"><svg><use href="#draw"/></svg></button><button class="t" aria-label="圆角"><svg><use href="#fillet"/></svg></button><button class="t" aria-label="快速标注"><svg><use href="#qdim"/></svg></button>
  </div>
</section>

<main class="work">
  <aside class="side">
    <div class="shead"><span>矩形</span><button aria-label="停靠"><svg><use href="#pin"/></svg></button><button aria-label="关闭面板"><svg><use href="#wclose"/></svg></button></div>
    <div class="sbody">
      <div class="stabs">
        <button class="on" aria-label="矩形"><svg class="br"><use href="#brect"/></svg></button><button aria-label="管理器"><svg><use href="#tree"/></svg></button><button aria-label="对象"><svg><use href="#obj"/></svg></button><button aria-label="场景"><svg><use href="#scene"/></svg></button><button aria-label="角色"><svg><use href="#user"/></svg></button>
      </div>
      <form class="panel">
        <div class="acts"><button type="button" class="a on" aria-label="确定"><svg><use href="#ok"/></svg></button><button type="button" class="a" aria-label="取消"><svg><use href="#no"/></svg></button><span class="grow"></span><button type="button" class="a" aria-label="信息"><svg><use href="#info"/></svg></button><button type="button" class="a slim" aria-label="展开"><svg><use href="#expand"/></svg></button></div>
        <section class="box">
          <h2>必选</h2>
          <div class="modes"><button type="button" aria-label="中心"><svg><use href="#m1"/></svg></button><button type="button" class="on" aria-label="角点"><svg><use href="#m2"/></svg></button><button type="button" aria-label="中心-角度"><svg><use href="#m3"/></svg></button><button type="button" aria-label="角点-角度"><svg><use href="#m4"/></svg></button><button type="button" aria-label="平行四边形"><svg><use href="#m5"/></svg></button></div>
          <div class="row"><label for="p1">点1</label><input id="p1" type="text" value="45,-20"><button type="button" class="cv" aria-label="展开点1"><svg><use href="#chev"/></svg></button><button type="button" class="dn" aria-label="点1输入"><svg><use href="#down"/></svg><i class="caret"></i></button></div>
          <div class="row"><label for="p2">点2</label><input id="p2" type="text" value="94.1607,-45.8138"><button type="button" class="cv" aria-label="展开点2"><svg><use href="#chev"/></svg></button><button type="button" class="dn" aria-label="点2输入"><svg><use href="#down"/></svg><i class="caret"></i></button></div>
        </section>
        <section class="box dims">
          <h2>标注</h2>
          <div class="row"><label for="w">宽度</label><span class="num"><input id="w" type="text" value="49.16066"><span>mm</span><span class="spin"></span></span><button type="button" class="lk" aria-label="锁定宽度"><svg><use href="#lock"/></svg></button></div>
          <div class="row"><label for="h">高度</label><span class="num"><input id="h" type="text" value="-25.81376"><span>mm</span><span class="spin"></span></span><button type="button" class="lk" aria-label="锁定高度"><svg><use href="#lock"/></svg></button></div>
        </section>
      </form>
    </div>
  </aside>

  <section class="doc">
    <div class="dtabs"><div class="dtab"><span>* 零件001.Z3PRT - [草图2]</span><button aria-label="关闭标签"><svg><use href="#dclose"/></svg></button></div><button aria-label="新标签"><svg><use href="#plus"/></svg></button><span class="grow"></span><button aria-label="标签列表"><svg><use href="#tmenu"/></svg></button></div>
    <div class="view">
      <svg class="scene">
        <defs>
          <pattern id="pd" x="587" y="302" width="69" height="69" patternUnits="userSpaceOnUse"><path d="M0 0h1v1H0zM35 0h1v1h-1zM0 35h1v1H0zM35 35h1v1h-1z" fill="#000"/></pattern>
          <linearGradient id="part" x1="0" y1="0" x2="0" y2="1"><stop offset="0" stop-color="#dec299"/><stop offset="1" stop-color="#b99c70"/></linearGradient>
          <linearGradient id="cyl"><stop offset="0" stop-color="#c6994f"/><stop offset=".5" stop-color="#d6a862"/><stop offset="1" stop-color="#c6994f"/></linearGradient>
          <linearGradient id="shine" x1="0" y1="0" x2="0" y2="1"><stop offset="0" stop-color="#cbab7c"/><stop offset=".3" stop-color="#dcc296"/><stop offset=".6" stop-color="#c8a878"/><stop offset=".8" stop-color="#dcc8a0"/><stop offset="1" stop-color="#c0a074"/></linearGradient>
        </defs>
        <g transform="translate(-361 -196)">
          <path d="M588 302.500h48v48h-48z" fill="#d5b88e" opacity=".5"/>
          <path fill="url(#part)" stroke="#000" stroke-width="1.300" fill-rule="evenodd" d="M656.500 302.500H1140a69 69 0 0 1 69.500 69v138a69 69 0 0 1-69.500 69H656.500a69 69 0 0 1-69-69v-138a69 69 0 0 1 69-69zM622 371.500a34.500 34.500 0 1 0 69 0a34.500 34.500 0 1 0-69 0zM622 509.500a34.500 34.500 0 1 0 69 0a34.500 34.500 0 1 0-69 0zM1105.500 371.500a34.500 34.500 0 1 0 69 0a34.500 34.500 0 1 0-69 0zM1105.500 509.500a34.500 34.500 0 1 0 69 0a34.500 34.500 0 1 0-69 0zM829 441a69 69 0 1 0 138 0a69 69 0 1 0-138 0z"/>
          <path d="M591 350q9-31 44-44v44z" fill="#cda66a" opacity=".75"/>
          <path d="M635 305v45H588" fill="none" stroke="#a87830" stroke-dasharray="13 4"/>
          <path d="M857 303h82.500v41H857z" fill="url(#cyl)"/><path d="M829 330h138v14H829z" fill="#c99036" opacity=".6"/><path d="M829 344h138" stroke="#4b3921" stroke-width="1.500"/>
          <path d="M787.500 330.500h221v220h-221z" fill="none" stroke="#5d4c35" stroke-width="1.400"/>
          <path d="M1036.500 371.500h28V510h-28z" fill="url(#shine)" stroke="#221a10" stroke-width="1.200"/>
          <path d="M760.500 302.500v276M1036.500 302.500v276" stroke="#000" stroke-width="1.300"/>
          <path d="M851 393.500h95v95h-95z" fill="#c8aa80" fill-opacity=".35" stroke="#b07a28" stroke-dasharray="14 4" stroke-width="1.300"/>
          <path d="M851 440.500h47V393" fill="none" stroke="#b07a28"/>
          <path d="M361 196h1004v493H361z" fill="url(#pd)"/>
          <path d="M361 302.500h1004" stroke="#0000ff" stroke-width="2" stroke-dasharray="14 3 2 3"/>
          <path d="M587.500 196v493" stroke="#0000ff" stroke-width="2" stroke-dasharray="14 3 2 3"/>
          <path d="M587.500 241v61" stroke="#24e83c" stroke-width="2"/><path d="M588 302.500h64" stroke="#ff1010" stroke-width="2"/>
          <path d="M671 300l5 2.500-5 2.500zM585 386l2.500 6 2.500-6z" fill="#5c3c0c"/>
          <g fill="none" stroke="#b06a14" stroke-width="1.400"><path d="M583.500 297h8l-8 11h8M687 296l4 6 4-6M691 302v6M583 401l9 11M592 401l-9 11"/></g>
          <path d="M898.500 440.500h340v178h-340z" fill="#9bff9b" fill-opacity=".45" stroke="#0a8cff" stroke-width="2"/>
          <path d="M898 403v34" stroke="#e03020" stroke-width="1.500"/><path d="M898.500 418v21M859 440.500h36M905 423.500h119M1113 423.500h112M864 449v66M864 545v60" stroke="#111" stroke-width="1.400"/>
          <path d="M1238 418v18M859 618.500h35" stroke="#444" stroke-width="2"/>
          <path d="M899 419.500l8 4-8 4zM1224 420.500l10 3-10 3zM860 441h8l-4 8zM860.500 605h7l-3.500 12z" fill="#4df3ff"/>
          <path d="M894 400l8 12M902 400l-8 12" stroke="#f00" stroke-width="1.500"/><path d="M930 435l8 12M938 435l-8 12" stroke="#55c824" stroke-width="1.800"/><path d="M938 435l-8 12" stroke="#d08a45"/>
          <circle cx="898.500" cy="440.500" r="4.500" fill="none" stroke="#0036c8" stroke-width="2"/>
          <path d="M1233 618.500h11M1238.500 613v11M1273 406.500h11M1278.500 401v11" stroke="#0030c8" stroke-width="2"/>
          <path d="M1272.500 400.500h11v11h-11z" fill="none" stroke="#20dcff"/>
          <g class="vtext"><text x="1036" y="430">49.1607</text><text x="828" y="537">-25.8138</text><text x="365" y="685">71.3623mm</text></g>
          <path d="M371 258h8v83h-8z" fill="#f00"/><path d="M371 341h8v83h-8z" fill="#000"/><path d="M371 424h8v83h-8z" fill="#ff0"/><path d="M371 507h8v83h-8z" fill="#00f"/>
          <g class="vlab"><text x="384" y="299">过约束</text><text x="384" y="382">缺少约束</text><text x="384" y="466">未求解</text><text x="384" y="549">明确约束</text></g>
          <path d="M423 613.500h43" stroke="#20c838" stroke-width="2"/><path d="M422.500 614v42" stroke="#ff1010" stroke-width="2"/><path d="M459 611l6 2.500-6 2.500zM420 650l2.500 6 2.500-6z" fill="#333"/>
          <path d="M418 608h8l-8 11h8" fill="none" stroke="#0010e0" stroke-width="1.500"/><path d="M469 608l4 5.500 4-5.500M473 613v6" fill="none" stroke="#18d030" stroke-width="1.500"/><path d="M418 658l9 12M427 658l-9 12" stroke="#f00" stroke-width="1.500"/><circle cx="422.500" cy="613.500" r="2" fill="#001050"/>
        </g>
      </svg>
      <div class="hint"><p>&lt;F8&gt;或者&lt;Shift-roll&gt; 查找下一个有效的过滤器设置.</p><p>&lt;单击右键&gt;获取点输入.</p></div>
      <div class="vbar">
        <button aria-label="刷"><svg><use href="#brush"/></svg></button><button aria-label="剪"><svg><use href="#snip"/></svg></button><button aria-label="框选"><svg><use href="#boxsel"/></svg></button><button aria-label="着色"><svg class="big"><use href="#cube"/></svg></button>
        <button class="c f" aria-label="线框"><svg class="big"><use href="#wire"/></svg><i class="caret"></i></button><button class="c" aria-label="视图"><svg><use href="#bsq"/></svg><i class="caret"></i></button><button class="c" aria-label="栅格"><svg><use href="#grid"/></svg><i class="caret"></i></button><button class="c" aria-label="缩放"><svg><use href="#zoomv"/></svg><i class="caret"></i></button>
        <button aria-label="面板"><svg><use href="#pane"/></svg></button><button aria-label="标注显示"><svg><use href="#hdim"/></svg></button><button aria-label="约束显示"><svg><use href="#omega"/></svg></button><button aria-label="颜色"><svg><use href="#rgb"/></svg></button><button class="on" aria-label="链"><svg><use href="#chain"/></svg></button><button class="on" aria-label="轮廓"><svg><use href="#tshape"/></svg></button><button aria-label="投影"><svg><use href="#proj"/></svg></button><button aria-label="图层"><svg><use href="#layer"/></svg></button><button class="on" aria-label="十字"><svg><use href="#gcross"/></svg></button><button class="on" aria-label="目标"><svg><use href="#target"/></svg></button><button class="on" aria-label="隐藏"><svg><use href="#nobox"/></svg></button><button class="c" aria-label="显示"><svg><use href="#mon"/></svg><i class="caret"></i></button><button aria-label="线型"><svg><use href="#dots"/></svg></button><button aria-label="线宽"><svg><use href="#black"/></svg></button><button class="c" aria-label="刷新"><svg><use href="#ring"/></svg><i class="caret"></i></button>
      </div>
      <div class="net"><span class="led"></span><span class="meter"></span><b>4.1</b><small><i class="au">↑</i> K/s</small><b>6.8</b><small><i class="ad">↓</i> K/s</small></div>
    </div>
  </section>
</main>

<footer class="status">
  <span class="msg">&lt;单击中键&gt;结束或输入下个矩形的点1。单击Shift键锁定约束。长按Shift键禁用约束捕捉。</span>
  <button class="on" aria-label="工具"><svg><use href="#st1"/></svg></button><button aria-label="显示器"><svg><use href="#st2"/></svg></button><button aria-label="消息"><svg><use href="#st3"/></svg></button>
  <input type="text" aria-label="命令行">
</footer>
<div class="mark">CSDN @山涧果子</div>
</body>
</html>
```
FILE: styles.css
```css
* { box-sizing: border-box; }
body {
  margin: 0; height: 100vh; overflow: hidden; position: relative;
  display: flex; flex-direction: column;
  background: #e1e5e8; color: #222;
  font: 12px/16px "Noto Sans CJK SC", "Noto Sans", sans-serif;
}
button { border: 0; padding: 0; background: none; font: inherit; color: inherit; display: flex; align-items: center; justify-content: center; white-space: nowrap; flex: none; }
input, select { font: inherit; color: #111; border: 1px solid #b9bec6; border-radius: 0; background: #fff; padding: 0 2px; min-width: 0; }
svg { width: 16px; height: 16px; display: block; flex: none; }
.sprite { position: absolute; width: 0; height: 0; }
.caret { display: inline-block; border: 3px solid transparent; border-top-color: #3c3c3c; border-bottom: 0; flex: none; }
.vsep { width: 1px; height: 18px; background: #b4b9be; flex: none; }
.grow { flex: 1; }

/* title bar */
.titlebar { height: 24px; display: flex; align-items: center; flex: none; }
.logo { width: 18px; height: 18px; margin: 0 3px; }
.titlebar .vsep { height: 14px; }
.quick { display: flex; align-items: center; margin-left: 7px; }
.q { width: 24px; height: 24px; }
.qa { width: 8px; height: 24px; }
.qm { width: 16px; height: 24px; margin-left: 1px; }
.qm + .qm { margin-left: 2px; }
.title { flex: 1; display: flex; justify-content: center; gap: 20px; margin: 0; padding-right: 8px; font-size: 12px; font-weight: 400; white-space: nowrap; }
.winbtns { display: flex; gap: 7px; padding-right: 5px; }

/* tab row */
.tabs { height: 23px; display: flex; align-items: stretch; flex: none; border-bottom: 1px solid #b7bec6; padding-left: 1px; }
.file { width: 75px; margin-top: 2px; background: #2a60b8; border: 1px solid #1a4292; color: #fff; }
.tab { width: 46px; height: 22px; margin-top: 1px; }
.tab.on { width: 45px; height: 23px; margin: 0 0 0 3px; background: #fcfcfc; border: 1px solid #b7bec6; border-bottom: 0; position: relative; top: 1px; }
.tabright { margin-left: auto; display: flex; align-items: center; padding-right: 1px; }
.search { position: relative; display: flex; margin: 0 9px; }
.search input { width: 159px; height: 20px; }
.search svg { position: absolute; right: 7px; top: 2px; }
.helpb { margin-left: 12px; gap: 5px; }
.mdi { display: flex; margin-left: 5px; }

/* ribbon */
.ribbon { height: 94px; flex: none; display: flex; background: #fcfcfc; border-bottom: 1px solid #b7bec6; padding: 4px 0 0 1px; }
.group { display: flex; flex-direction: column; padding: 0 9px; border-right: 1px solid #d0d5da; flex: none; position: relative; }
.group.first { padding: 0 8px 0 13px; }
.cols { display: flex; gap: 10px; height: 69px; }
.dense { padding: 0 8px; }
.dense .cols { gap: 9px; }
.col { display: flex; flex-direction: column; align-items: flex-start; }
.col button { height: 23px; gap: 3px; }
.col .caret { margin-left: 2px; }
.glabel { text-align: center; color: #626b7c; padding-top: 1px; line-height: 18px; }
.glabel.opt { padding-right: 14px; }
.glabel.tight { text-align: left; margin-left: -4px; }
.more { position: absolute; right: 4px; bottom: 5px; width: 10px; height: 10px; }
.more svg { width: 8px; height: 8px; }

/* snap toolbar */
.toolbar { height: 33px; flex: none; display: flex; align-items: center; padding: 1px 0 0 4px; }
.grip { width: 2px; height: 16px; margin-right: 7px; flex: none; background: repeating-linear-gradient(#70769a 0 2px, transparent 2px 4px); }
.t { width: 23px; height: 22px; }
.t.on { background: #ffe277; border: 1px solid #c99a3d; }
.pick { width: 27px; gap: 5px; margin-right: 8px; }
.ficon { margin: 0 5px 0 7px; }
.sel { position: relative; display: flex; }
.sel select { appearance: none; width: 97px; height: 21px; }
.sel::after { content: ""; position: absolute; right: 5px; top: 8px; border: 3px solid transparent; border-top-color: #333; border-bottom: 0; }
.sel.off select { background: #eceeef; color: #888; border-color: #cfd3d6; opacity: 1; }
.sel.off::after { border-top-color: #aaa; }
.inv { margin: 0 27px 0 25px; }
.toolbar .sel.off { margin-left: 4px; }
.toolbar .t + .vsep { margin-left: 4px; }
.toolbar .pick + .vsep { margin-left: 0; }
.tset { display: flex; gap: 1px; }
.sel + .tset { margin: 0 6px 0 1px; }
.grip + .tset { margin-left: -4px; }

/* work area */
.work { flex: 1; min-height: 0; display: flex; }
.side { width: 360px; flex: none; display: flex; flex-direction: column; border-right: 1px solid #b9bfc5; padding: 0 2px; }
.shead { height: 20px; display: flex; align-items: center; padding: 0 4px 0 3px; gap: 3px; }
.shead span { flex: 1; }
.sbody { flex: 1; display: flex; border: solid #b9bfc5; border-width: 1px 1px 0 0; }
.stabs { width: 31px; display: flex; flex-direction: column; border-right: 1px solid #b9bfc5; }
.stabs button { height: 48px; }
.stabs button svg { width: 24px; height: 24px; }
.stabs .on { height: 47px; width: 31px; background: #fff; border: 1px solid #b9bfc5; border-width: 0 0 1px 1px; }
.stabs .on .br { width: 20px; height: 18px; }
.panel { flex: 1; min-width: 0; padding: 2px; background: #dce0e8; }
.acts { display: flex; gap: 3px; height: 25px; margin: 0 0 2px 1px; }
.a { width: 27px; height: 24px; background: #fff; border: 1px solid #b9bec6; }
.a.slim { width: 15px; }
.a.slim svg { width: 8px; }
.a.on { border: 2px solid #dca93d; }
.box { margin: 0 3px 2px 2px; border: 1px solid #b9bec6; background: #dde1ea; padding-bottom: 2px; }
.box h2 { margin: 0; height: 24px; display: flex; align-items: center; gap: 6px; padding: 3px 0 0 4px; background: #fff; border-bottom: 1px solid #b9bec6; font-size: 12px; line-height: 18px; }
.box h2::before { content: ""; border: 5px solid transparent; border-top: 8px solid #4a4f58; border-bottom: 0; }
.modes { display: flex; justify-content: center; gap: 1px; padding: 3px 0 2px; }
.modes button { width: 36px; height: 36px; background: #fff; border: 1px solid #b9bec6; }
.modes .on { background: #ffe277; border-color: #c99a3d; }
.modes svg { width: 34px; height: 34px; }
symbol text { font: 9px "Noto Sans", sans-serif; fill: #222; }
.row { height: 26px; display: flex; align-items: center; padding-left: 7px; }
.row label { width: 102px; }
.row > input { width: 135px; height: 22px; }
.row input { padding-bottom: 2px; }
.dims { padding: 0; }
.dims h2 { margin-bottom: 2px; }
.cv { width: 12px; margin-left: 6px; }
.cv svg { width: 12px; height: 14px; }
.dn { margin-left: 11px; gap: 6px; }
.dn svg { width: 14px; }
.num { width: 171px; height: 22px; border: 1px solid #b9bec6; background: #fff; display: flex; align-items: center; }
.num input { flex: 1; border: 0; height: 20px; }
.spin { width: 7px; height: 12px; margin: 0 4px 0 6px; position: relative; }
.spin::before, .spin::after { content: ""; position: absolute; left: 0; border: 3px solid transparent; }
.spin::before { top: 0; border-bottom-color: #333; border-top: 0; }
.spin::after { bottom: 0; border-top-color: #333; border-bottom: 0; }
.lk { margin-left: 5px; }

/* document */
.doc { flex: 1; min-width: 0; display: flex; flex-direction: column; padding-left: 1px; }
.dtabs { height: 22px; display: flex; align-items: center; border-bottom: 1px solid #b9bfc5; flex: none; padding-right: 2px; }
.dtab { width: 198px; height: 22px; background: #fff; border: 1px solid #b9bfc5; border-bottom: 0; display: flex; align-items: center; justify-content: flex-end; gap: 3px; padding: 0 11px 2px 0; margin-right: 3px; position: relative; top: 1px; white-space: nowrap; }
.view { flex: 1; position: relative; overflow: hidden; background: linear-gradient(#fff, #a0a0a0); }
.scene { position: absolute; inset: 0; width: 100%; height: 100%; }
.vtext { font-size: 18px; fill: #000; }
.vlab { font-size: 17px; fill: #000; }
.hint { position: absolute; left: 21px; top: 4px; color: #000; font: 11px/15px "Noto Sans", "Noto Sans CJK SC", sans-serif; white-space: nowrap; }
.hint p { margin: 0; }
.vbar { position: absolute; left: 173px; top: 2px; display: flex; gap: 1px; }
.vbar button { width: 24px; height: 23px; }
.vbar .on { background: #ffe277; border: 1px solid #c99a3d; }
.vbar .c { width: 36px; gap: 5px; padding-right: 1px; }
.vbar .f { margin-left: 11px; }
.vbar .big { width: 18px; height: 18px; }
.vbar .c .big { margin: 0 -1px; }
.net { position: absolute; right: 0; top: 135px; width: 33px; height: 142px; border-radius: 8px 0 0 8px; background: #96989c; box-shadow: 0 0 2px #777; color: #fff; display: flex; flex-direction: column; align-items: center; }
.led { width: 11px; height: 11px; border-radius: 50%; background: #05bd68; margin: 11px 0 18px; }
.meter { width: 10px; height: 32px; border-radius: 5px; background: linear-gradient(#a8aaae 0 36%, #e0a91c 40%, #a8c840 65%, #35c2b5); margin-bottom: 11px; }
.net b { font-size: 11px; font-weight: 400; line-height: 14px; }
.net small { font-size: 10px; line-height: 13px; color: #dcdcdc; white-space: nowrap; }
.net i { font-style: normal; }
.au { color: #20a8ff; }
.ad { color: #05bd68; }

/* status bar */
.status { height: 26px; flex: none; display: flex; align-items: flex-end; border-top: 1px solid #c5c9cc; background: #e1e5e8; }
.status .msg { flex: 0 1 914px; height: 21px; padding: 3px 0 0 6px; border-right: 1px solid #777; margin-right: 14px; white-space: nowrap; }
.status button { width: 22px; height: 20px; margin-right: 7px; }
.status .on { background: #ffe277; border: 1px solid #c99a3d; }
.status input { flex: 1; height: 21px; border-bottom: 0; }
.mark { position: absolute; right: 4px; bottom: 7px; font-size: 27px; font-weight: 300; line-height: 36px; color: rgba(255,255,255,.75); text-shadow: 1px 1px 1px rgba(70,70,70,.75); white-space: nowrap; pointer-events: none; }
```
